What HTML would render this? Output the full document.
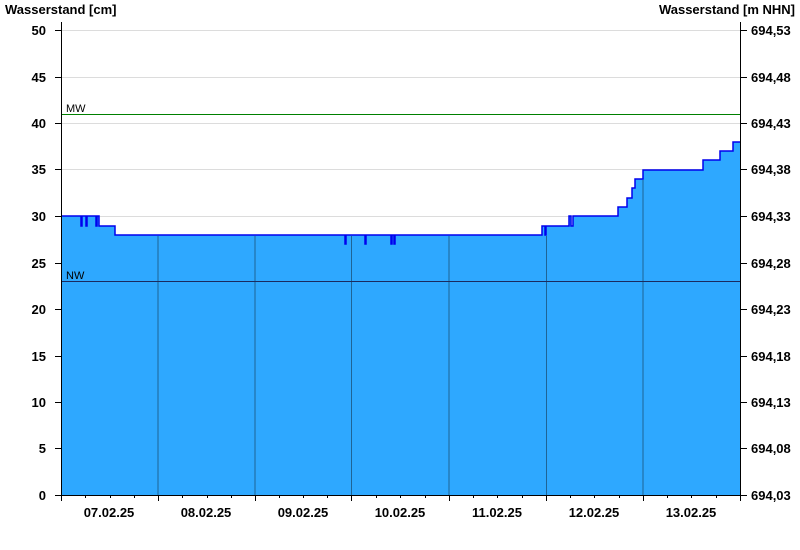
<!DOCTYPE html>
<html><head><meta charset="utf-8"><style>
html,body{margin:0;padding:0;background:#fff;width:800px;height:550px;overflow:hidden}
svg{display:block}
text{font-family:"Liberation Sans",Arial,sans-serif;font-size:13px;fill:#000}
.b{font-weight:bold}
</style></head><body>
<svg width="800" height="550" viewBox="0 0 800 550">
<text x="5" y="14" class="b">Wasserstand [cm]</text>
<text x="795" y="14" class="b" text-anchor="end">Wasserstand [m NHN]</text>
<g stroke="#dcdcdc" stroke-width="1">
<line x1="61" x2="740" y1="30.5" y2="30.5"/><line x1="61" x2="740" y1="77.5" y2="77.5"/>
<line x1="61" x2="740" y1="123.5" y2="123.5"/><line x1="61" x2="740" y1="169.5" y2="169.5"/>
<line x1="61" x2="740" y1="216.5" y2="216.5"/>
</g>
<polygon fill="#2ea8ff" points="61,495 61,216 81,216 81,226 82,226 82,216 86,216 86,226 87,226 87,216 96,216 96,226 97,226 97,216 99,216 99,226 100,226 100,226 115,226 115,235 345,235 345,244 346,244 346,235 365,235 365,244 366,244 366,235 391,235 391,244 392,244 392,235 394,235 394,244 395,244 395,235 542,235 542,226 545,226 545,235 546,235 546,226 569,226 569,216 571,216 571,226 573,226 573,216 618,216 618,207 627,207 627,198 632,198 632,188 635,188 635,179 638,179 638,179 643,179 643,170 646,170 646,170 703,170 703,160 720,160 720,151 733,151 733,142 740,142 740,495"/>
<polyline fill="none" stroke="#0000ee" stroke-width="1.5" points="61,216 81,216 81,226 82,226 82,216 86,216 86,226 87,226 87,216 96,216 96,226 97,226 97,216 99,216 99,226 100,226 100,226 115,226 115,235 345,235 345,244 346,244 346,235 365,235 365,244 366,244 366,235 391,235 391,244 392,244 392,235 394,235 394,244 395,244 395,235 542,235 542,226 545,226 545,235 546,235 546,226 569,226 569,216 571,216 571,226 573,226 573,216 618,216 618,207 627,207 627,198 632,198 632,188 635,188 635,179 638,179 638,179 643,179 643,170 646,170 646,170 703,170 703,160 720,160 720,151 733,151 733,142 740,142"/>
<g stroke="#1e6496" stroke-width="1">
<line x1="158" x2="158" y1="236" y2="495"/><line x1="255" x2="255" y1="236" y2="495"/>
<line x1="351.5" x2="351.5" y1="236" y2="495"/><line x1="449" x2="449" y1="236" y2="495"/>
<line x1="546.5" x2="546.5" y1="236" y2="495"/><line x1="643" x2="643" y1="180" y2="495"/>
</g>
<line x1="61" x2="740" y1="114.5" y2="114.5" stroke="#008000" stroke-width="1"/>
<text x="66" y="112" style="font-size:11px">MW</text>
<line x1="61" x2="740" y1="281.5" y2="281.5" stroke="#1a2a60" stroke-width="1"/>
<text x="66" y="279" style="font-size:11px">NW</text>
<g stroke="#000" stroke-width="1">
<line x1="61.5" x2="61.5" y1="22" y2="501"/>
<line x1="740.5" x2="740.5" y1="22" y2="501"/>
<line x1="55" x2="740" y1="495.5" y2="495.5"/>
</g>
<g stroke="#000" stroke-width="1" id="lt">
<line x1="55" x2="61" y1="30.5" y2="30.5"/><line x1="55" x2="61" y1="77.5" y2="77.5"/><line x1="55" x2="61" y1="123.5" y2="123.5"/><line x1="55" x2="61" y1="169.5" y2="169.5"/><line x1="55" x2="61" y1="216.5" y2="216.5"/><line x1="55" x2="61" y1="263.5" y2="263.5"/><line x1="55" x2="61" y1="309.5" y2="309.5"/><line x1="55" x2="61" y1="356.5" y2="356.5"/><line x1="55" x2="61" y1="402.5" y2="402.5"/><line x1="55" x2="61" y1="448.5" y2="448.5"/>
<line x1="740" x2="747" y1="30.5" y2="30.5"/><line x1="740" x2="747" y1="77.5" y2="77.5"/><line x1="740" x2="747" y1="123.5" y2="123.5"/><line x1="740" x2="747" y1="169.5" y2="169.5"/><line x1="740" x2="747" y1="216.5" y2="216.5"/><line x1="740" x2="747" y1="263.5" y2="263.5"/><line x1="740" x2="747" y1="309.5" y2="309.5"/><line x1="740" x2="747" y1="356.5" y2="356.5"/><line x1="740" x2="747" y1="402.5" y2="402.5"/><line x1="740" x2="747" y1="448.5" y2="448.5"/><line x1="740" x2="747" y1="495.5" y2="495.5"/>
<line x1="61.5" x2="61.5" y1="495" y2="501"/><line x1="158.5" x2="158.5" y1="495" y2="501"/><line x1="255.5" x2="255.5" y1="495" y2="501"/><line x1="351.5" x2="351.5" y1="495" y2="501"/><line x1="449.5" x2="449.5" y1="495" y2="501"/><line x1="546.5" x2="546.5" y1="495" y2="501"/><line x1="643.5" x2="643.5" y1="495" y2="501"/>
<line x1="85.5" x2="85.5" y1="495" y2="498"/><line x1="110.5" x2="110.5" y1="495" y2="498"/><line x1="134.5" x2="134.5" y1="495" y2="498"/>
<line x1="182.5" x2="182.5" y1="495" y2="498"/><line x1="207.5" x2="207.5" y1="495" y2="498"/><line x1="231.5" x2="231.5" y1="495" y2="498"/>
<line x1="279.5" x2="279.5" y1="495" y2="498"/><line x1="303.5" x2="303.5" y1="495" y2="498"/><line x1="327.5" x2="327.5" y1="495" y2="498"/>
<line x1="376.5" x2="376.5" y1="495" y2="498"/><line x1="400.5" x2="400.5" y1="495" y2="498"/><line x1="425.5" x2="425.5" y1="495" y2="498"/>
<line x1="473.5" x2="473.5" y1="495" y2="498"/><line x1="497.5" x2="497.5" y1="495" y2="498"/><line x1="522.5" x2="522.5" y1="495" y2="498"/>
<line x1="570.5" x2="570.5" y1="495" y2="498"/><line x1="594.5" x2="594.5" y1="495" y2="498"/><line x1="619.5" x2="619.5" y1="495" y2="498"/>
<line x1="667.5" x2="667.5" y1="495" y2="498"/><line x1="691.5" x2="691.5" y1="495" y2="498"/><line x1="716.5" x2="716.5" y1="495" y2="498"/>
</g>
<g class="b" text-anchor="end">
<text x="46" y="35" class="b">50</text><text x="46" y="82" class="b">45</text><text x="46" y="128" class="b">40</text><text x="46" y="174" class="b">35</text><text x="46" y="221" class="b">30</text><text x="46" y="268" class="b">25</text><text x="46" y="314" class="b">20</text><text x="46" y="361" class="b">15</text><text x="46" y="407" class="b">10</text><text x="46" y="453" class="b">5</text><text x="46" y="500" class="b">0</text>
</g>
<g>
<text x="751" y="35" class="b">694,53</text><text x="751" y="82" class="b">694,48</text><text x="751" y="128" class="b">694,43</text><text x="751" y="174" class="b">694,38</text><text x="751" y="221" class="b">694,33</text><text x="751" y="268" class="b">694,28</text><text x="751" y="314" class="b">694,23</text><text x="751" y="361" class="b">694,18</text><text x="751" y="407" class="b">694,13</text><text x="751" y="453" class="b">694,08</text><text x="751" y="500" class="b">694,03</text>
</g>
<g text-anchor="middle">
<text x="109" y="517" class="b">07.02.25</text><text x="206" y="517" class="b">08.02.25</text><text x="303" y="517" class="b">09.02.25</text><text x="400" y="517" class="b">10.02.25</text><text x="497" y="517" class="b">11.02.25</text><text x="594" y="517" class="b">12.02.25</text><text x="691" y="517" class="b">13.02.25</text>
</g>
</svg>
</body></html>
